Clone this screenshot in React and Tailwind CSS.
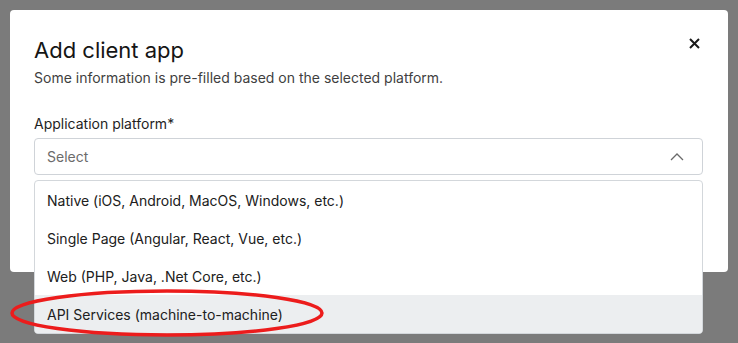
export default function App() {
  const items = [
    "Native (iOS, Android, MacOS, Windows, etc.)",
    "Single Page (Angular, React, Vue, etc.)",
    "Web (PHP, Java, .Net Core, etc.)",
    "API Services (machine-to-machine)",
  ];
  return (
    <div className="relative h-[343px] w-[738px] overflow-hidden bg-[#7b7b7b] pt-[10px] pl-[10px] font-['Inter',sans-serif]">
      <div className="relative h-[262px] w-[718px] rounded-[4px] bg-white px-[24px] pt-[26px]">
        <h2 className="text-[22px] leading-[28px] font-normal text-[#151515]">Add client app</h2>
        <p className="mt-1 text-[14px] leading-[20px] text-[#3f3f3f]">
          Some information is pre-filled based on the selected platform.
        </p>
        <button className="absolute right-[28px] top-[27px] flex h-[12px] w-[12px] items-center justify-center">
          <svg width="11" height="11" viewBox="0 0 11 11">
            <path d="M1 1L10 10M10 1L1 10" stroke="#1a1a1a" strokeWidth="2" />
          </svg>
        </button>
        <label className="mt-[26px] block text-[14px] leading-[20px] text-[#1e1e1e]">Application platform*</label>
        <div className="relative mt-1 w-[669px]">
          <div className="flex h-[37px] items-center justify-between rounded-[4px] border border-[#cfd3d8] pl-[12px] pr-[18px]">
            <span className="text-[14px] text-[#6b6b6b]">Select</span>
            <svg width="14" height="8" viewBox="0 0 14 8">
              <path d="M1 7L7 1L13 7" fill="none" stroke="#6a6a6a" strokeWidth="1.3" />
            </svg>
          </div>
          <div className="absolute left-0 top-[42px] z-10 w-[669px] overflow-hidden rounded-[4px] border border-[#d3d7db] bg-white">
            {items.map((t, i) => (
              <div
                key={t}
                className={
                  i === 3
                    ? "flex h-[38px] items-center bg-[#eceef0] pl-[12px] text-[14px] text-[#202020]"
                    : "flex h-[38px] items-center pl-[12px] text-[14px] text-[#202020]"
                }
              >
                {t}
              </div>
            ))}
          </div>
        </div>
      </div>
      <svg className="absolute left-0 top-[280px] z-20" width="340" height="63" viewBox="0 0 340 63">
        <ellipse cx="167" cy="33" rx="155" ry="22" fill="none" stroke="#ec1c1c" strokeWidth="3.5" />
      </svg>
    </div>
  );
}
